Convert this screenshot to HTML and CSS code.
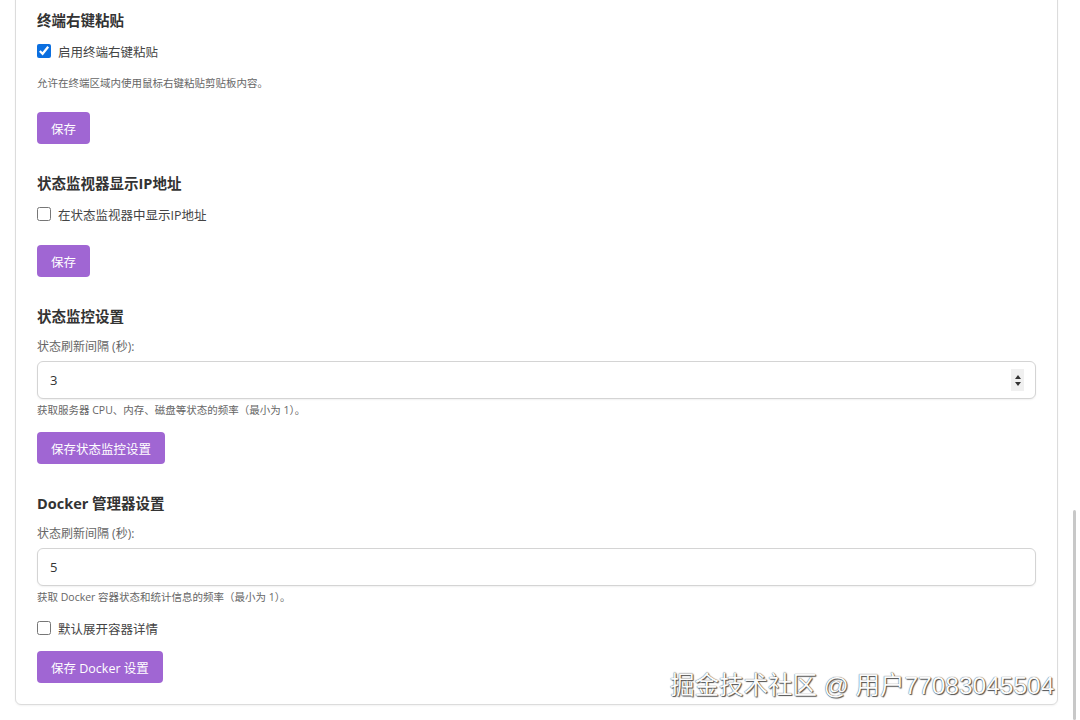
FILE: index.html
```html
<!doctype html>
<html>
<head>
<meta charset="utf-8">
<title>设置</title>
<link rel="stylesheet" href="styles.css">
</head>
<body>
<div class="card">
	<!-- 终端右键粘贴 -->
	<div class="section">
		<h3>终端右键粘贴</h3>
		<label class="check"><input type="checkbox" checked> 启用终端右键粘贴</label>
		<p class="desc">允许在终端区域内使用鼠标右键粘贴剪贴板内容。</p>
		<button class="btn">保存</button>
	</div>

	<!-- IP地址 -->
	<div class="section">
		<h3>状态监视器显示IP地址</h3>
		<label class="check"><input type="checkbox"> 在状态监视器中显示IP地址</label>
		<button class="btn btn-second">保存</button>
	</div>

	<!-- 状态监控 -->
	<div class="section">
		<h3>状态监控设置</h3>
		<label class="field-label">状态刷新间隔 (秒):</label>
		<div class="input-wrap">
			<input class="input" type="number" value="3">
			<span class="spin"><i class="up"></i><i class="down"></i></span>
		</div>
		<p class="help">获取服务器 CPU、内存、磁盘等状态的频率（最小为 1）。</p>
		<button class="btn">保存状态监控设置</button>
	</div>

	<!-- Docker -->
	<div class="section">
		<h3>Docker 管理器设置</h3>
		<label class="field-label">状态刷新间隔 (秒):</label>
		<div class="input-wrap">
			<input class="input" type="number" value="5">
		</div>
		<p class="help">获取 Docker 容器状态和统计信息的频率（最小为 1）。</p>
		<label class="check check-docker"><input type="checkbox"> 默认展开容器详情</label>
		<button class="btn">保存 Docker 设置</button>
	</div>
</div>

<div class="scroll-thumb"></div>
<div class="watermark">掘金技术社区 @ 用户77083045504</div>
</body>
</html>
```

FILE: styles.css
```css
* {margin:0; padding:0; box-sizing:border-box;}

html, body {height:100%; overflow:hidden;}
body {background:#fff; font-family:"Open Sans", "Noto Sans CJK SC", sans-serif; color:#333; position:relative;}

.card {width:1043px; margin:-10px 0 0 15px; padding:20px 21px 21px; border:1px solid #dcdcdc; border-radius:6px; background:#fff; box-shadow:0 1px 2px rgba(0,0,0,0.05);}

.section {margin-bottom:30px;}
.section:last-child {margin-bottom:0;}

h3 {font-size:14.5px; line-height:20px; font-weight:700; color:#333; margin-bottom:11px;}

.check {display:flex; align-items:center; height:18px; font-size:12.5px; color:#444;}
.check input {width:14px; height:14px; margin:0 7px 0 0; accent-color:#0b6fe0;}

.desc {font-size:10.5px; line-height:16px; color:#666; margin:15px 0 21px;}

.btn-second {margin-top:22px;}

.field-label {display:block; font-size:12px; line-height:18px; color:#666; margin-bottom:5px;}

.input-wrap {position:relative;}
.input {display:block; width:100%; height:38px; padding:0 12px; border:1px solid #d4d4d4; border-radius:6px; font-family:"Open Sans", sans-serif; font-size:13px; color:#333; background:#fff; box-shadow:0 1px 2px rgba(0,0,0,0.06); outline:none; -moz-appearance:textfield;}
.input::-webkit-inner-spin-button, .input::-webkit-outer-spin-button {-webkit-appearance:none; margin:0;}

.spin {position:absolute; right:12px; top:8px; width:13px; height:22px; background:#f0f0f0; display:flex; flex-direction:column; align-items:center; justify-content:center; gap:3px;}
.spin i {width:0; height:0; border-left:3.5px solid transparent; border-right:3.5px solid transparent;}
.spin .up {border-bottom:4px solid #333;}
.spin .down {border-top:4px solid #333;}

.help {font-size:10.5px; line-height:16px; color:#666; margin:3px 0 14px;}

.check-docker {margin:12px 0 14px;}

.btn {display:block; height:32px; padding:0 14px; border:none; border-radius:4px; background:#a066d3; color:#fff; font-family:"Open Sans", "Noto Sans CJK SC", sans-serif; font-size:12.5px; cursor:pointer;}

.scroll-thumb {position:absolute; right:4px; top:510px; width:3px; height:210px; background:#c8c8c8; border-radius:2px;}

.watermark {position:absolute; left:670px; top:670px; font-family:"Liberation Sans", "Noto Sans CJK SC", sans-serif; font-size:24.5px; line-height:32px; color:#fbfbfb; text-shadow:0 0 1px #222, 1px 1px 1px #555; white-space:nowrap;}
```
